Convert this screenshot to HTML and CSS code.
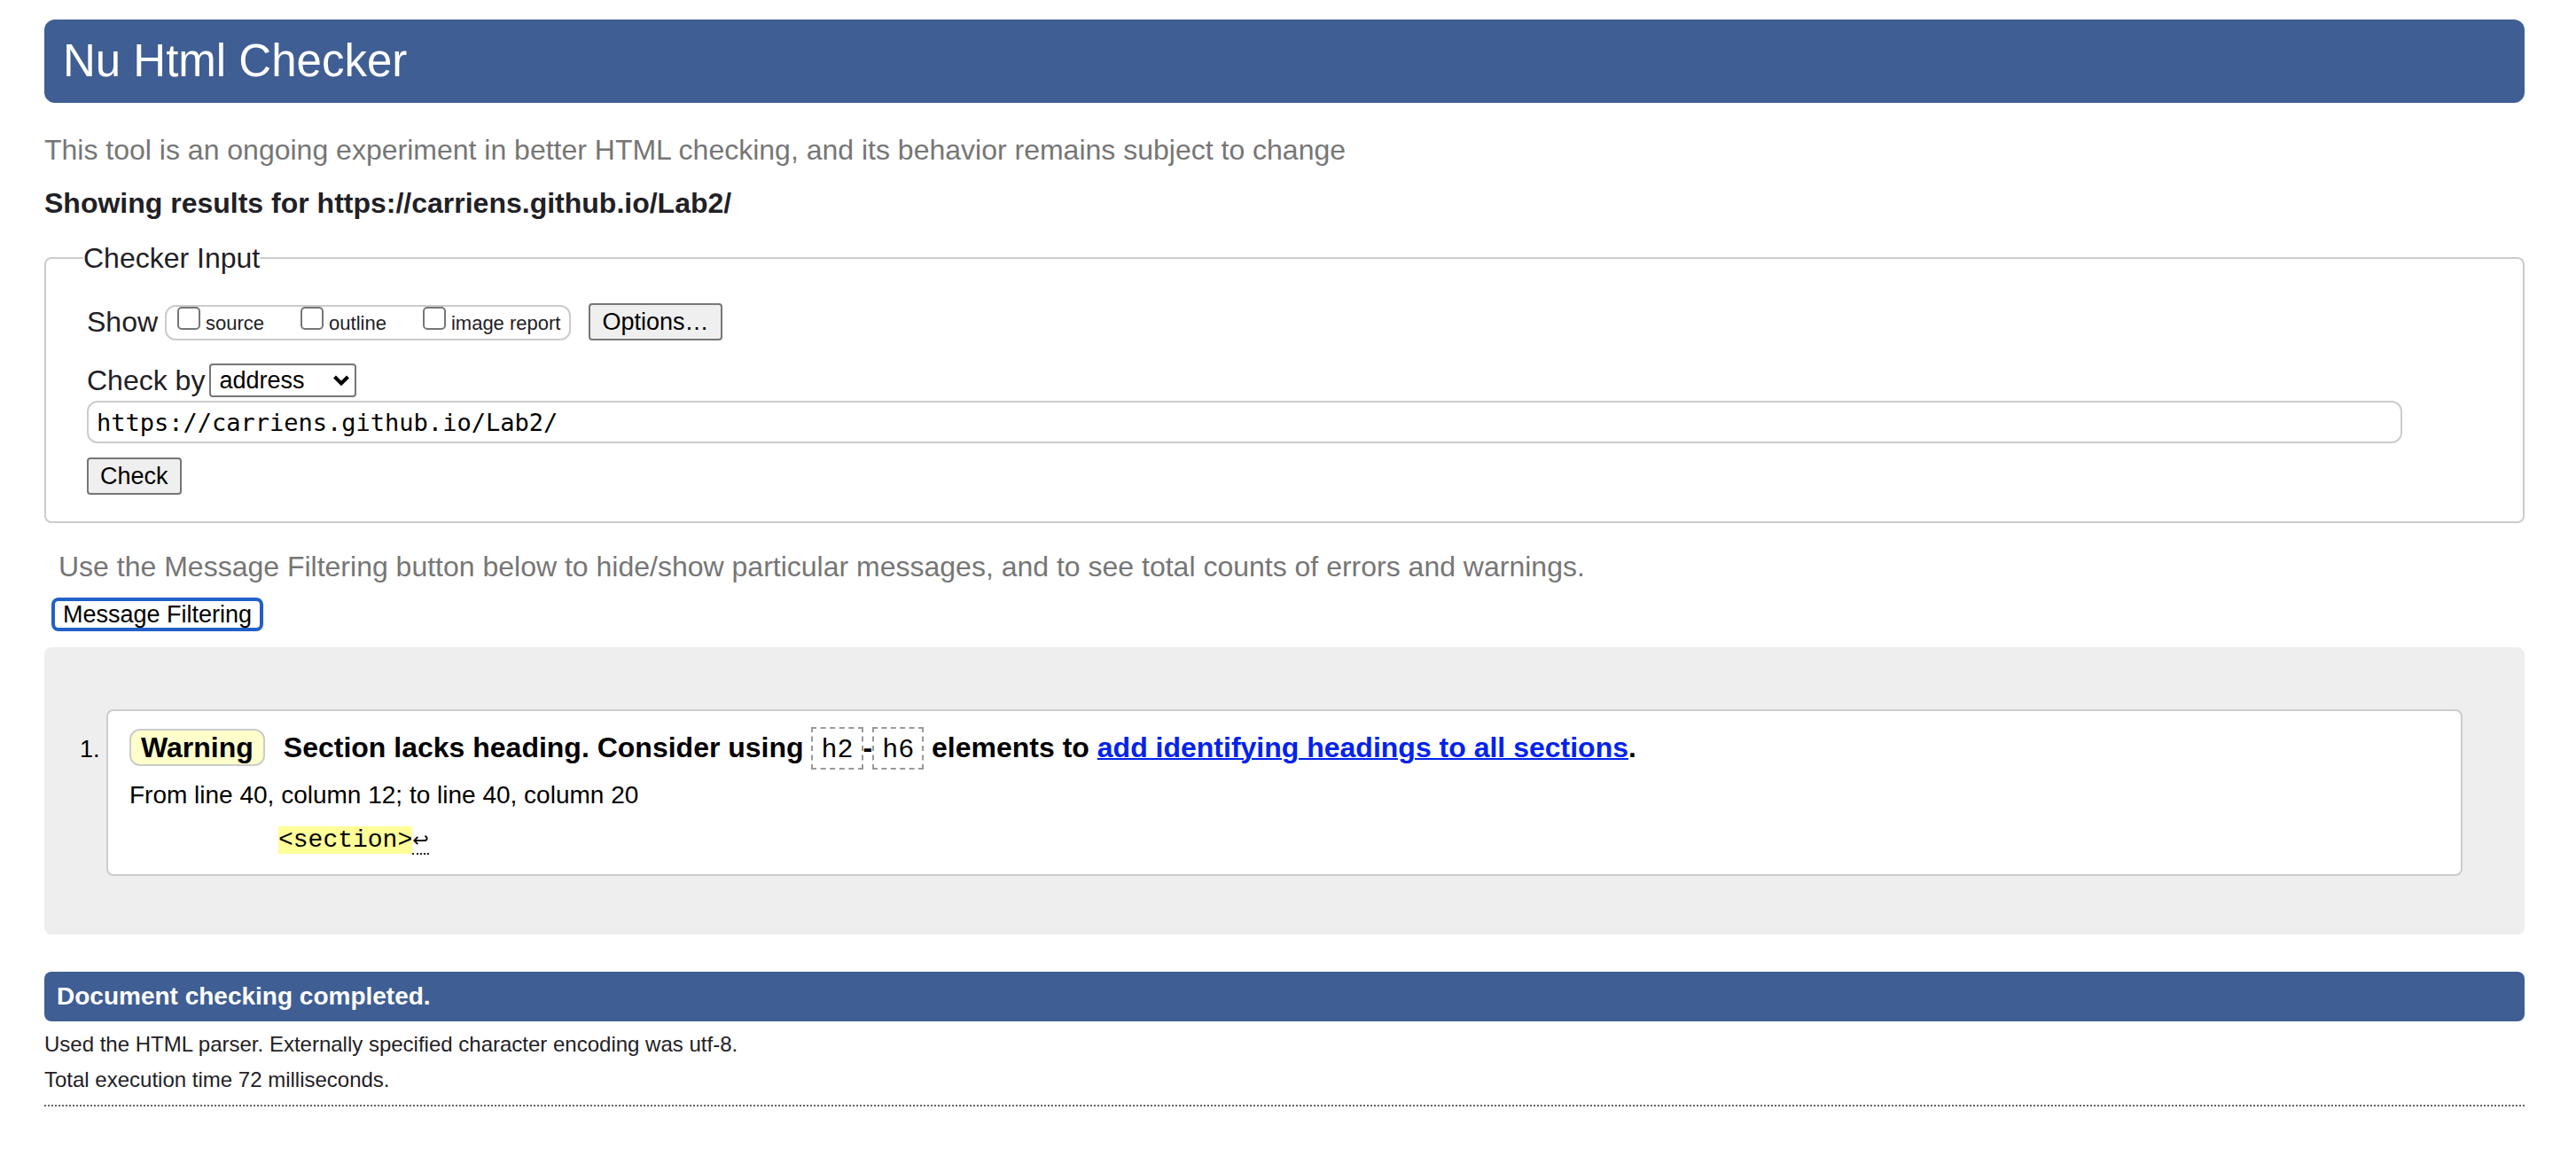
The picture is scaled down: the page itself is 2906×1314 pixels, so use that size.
FILE: index.html
```html
<!DOCTYPE html>
<html lang="en">
<head>
<meta charset="utf-8">
<title>Showing results for https://carriens.github.io/Lab2/ - Nu Html Checker</title>
<link rel="stylesheet" href="styles.css">
</head>
<body>
<header class="banner"><h1>Nu Html Checker</h1></header>
<main>
<p class="tagline">This tool is an ongoing experiment in better HTML checking, and its behavior remains subject to change</p>
<h2 class="results-title">Showing results for https://carriens.github.io/Lab2/</h2>
<form class="checker">
<fieldset class="panel">
<legend>Checker Input</legend>
<div class="show-row">
<span>Show</span>
<div class="checks">
<label class="check"><input type="checkbox"><span>source</span></label>
<label class="check"><input type="checkbox"><span>outline</span></label>
<label class="check"><input type="checkbox"><span>image report</span></label>
</div>
<button type="button" class="button">Options…</button>
</div>
<div class="by-row">
<label for="by">Check by</label>
<div class="select-wrap">
<select id="by"><option>address</option><option>file upload</option><option>text input</option></select>
<svg class="chevron" viewBox="0 0 18 14" aria-hidden="true"><path d="M1.500 3l7.500 7.500 7.500-7.500"/></svg>
</div>
</div>
<input class="address" type="text" aria-label="Address" value="https://carriens.github.io/Lab2/">
<button type="button" class="button">Check</button>
</fieldset>
</form>
<p class="hint">Use the Message Filtering button below to hide/show particular messages, and to see total counts of errors and warnings.</p>
<button type="button" class="filter">Message Filtering</button>
<ol class="results">
<li>
<div class="message">
<p class="summary"><strong class="badge">Warning</strong>Section lacks heading. Consider using <code>h2</code>-<code>h6</code> elements to <a href="#headings">add identifying headings to all sections</a>.</p>
<p class="location">From line 40, column 12; to line 40, column 20</p>
<p class="extract"><mark>&lt;section&gt;</mark><span class="newline">↩</span></p>
</div>
</li>
</ol>
<p class="done">Document checking completed.</p>
</main>
<footer class="details">
<p>Used the HTML parser. Externally specified character encoding was utf-8.</p>
<p>Total execution time 72 milliseconds.</p>
</footer>
</body>
</html>
```
FILE: styles.css
```css
* { box-sizing: border-box; }

body {
  margin: 22px 58px 0 50px;
  font: 32px/40px "Liberation Sans", Arial, sans-serif;
  color: #1f2126;
  background: #fff;
}

h1, h2, p { margin: 0; }
button, select { font: 27px/36px "Liberation Sans", Arial, sans-serif; color: #000; }

.banner {
  padding: 17px 21px;
  border-radius: 12px;
  background: #3f5e93;
  color: #fff;
}
.banner h1 { font-size: 51px; line-height: 60px; font-weight: 400; }

.tagline { margin-top: 33px; color: #767676; }
.results-title { margin-top: 20px; font-size: 32px; font-weight: 700; }

.panel {
  margin: 22px 0 0;
  padding: 31px 46px 30px;
  border: 2px solid #ccc;
  border-radius: 8px;
}
.panel legend { margin-left: -4px; padding: 0; }

.show-row { display: flex; align-items: center; }
.checks {
  display: flex;
  align-self: flex-end;
  gap: 41px;
  height: 40px;
  margin: 0 20px 0 8px;
  padding: 0 10px 0 12px;
  border: 2px solid #ccc;
  border-radius: 12px;
  font-size: 22px;
}
.check { display: flex; gap: 6px; line-height: 38px; }
.check input {
  appearance: none;
  width: 26px;
  height: 26px;
  margin: 0;
  border: 2px solid #767676;
  border-radius: 5px;
  background: #fff;
}
.button {
  display: block;
  height: 42px;
  padding: 0 13px;
  border: 2px solid #767676;
  border-radius: 4px;
  background: #efefef;
}

.by-row { display: flex; align-items: center; gap: 5px; margin-top: 25px; line-height: 38px; }
.select-wrap { display: grid; align-items: center; height: 40px; }
.select-wrap > * { grid-area: 1 / 1; }
.select-wrap select {
  appearance: none;
  width: 166px;
  height: 38px;
  padding: 0 9px;
  border: 2px solid #767676;
  border-radius: 4px;
  background: #fff;
  line-height: 34px;
}
.chevron {
  width: 18px;
  height: 14px;
  margin-right: 8px;
  justify-self: end;
  fill: none;
  stroke: #000;
  stroke-width: 4;
  pointer-events: none;
}
.address {
  display: block;
  width: calc(100% - 90px);
  height: 48px;
  margin: 3px 0 16px;
  padding: 0 9px;
  border: 2px solid #ccc;
  border-radius: 12px;
  background: #fff;
  color: #000;
  font: 27px "DejaVu Sans Mono", monospace;
}

.hint { margin: 29px 0 0 16px; color: #767676; }
.filter {
  display: block;
  height: 38px;
  margin: 15px 0 18px 8px;
  padding: 0 9px;
  border: 4px solid #2160c8;
  border-radius: 8px;
  background: #fff;
  line-height: 30px;
}

.results {
  margin: 0;
  padding: 70px 70px 66px;
  border-radius: 8px;
  background: #eee;
  color: #000;
  font-size: 27px;
}
.message {
  padding: 17px 24px 18px;
  border: 2px solid #ccc;
  border-radius: 8px;
  background: #fff;
}
.summary { font-size: 32px; line-height: 48px; font-weight: 700; }
.badge {
  display: inline-block;
  margin-right: 21px;
  padding: 0 11px;
  border: 2px solid #ccc;
  border-radius: 12px;
  background: #ffffcc;
  line-height: 38px;
}
.summary code {
  padding: 7px 9px 3px;
  border: 2px dashed #999;
  font: 30px/40px "Liberation Mono", monospace;
}
.summary a { color: #0022ee; text-decoration-thickness: 2px; }
.location { margin-top: 10px; font-size: 28px; }
.extract {
  margin: 11px 0 0 168px;
  font: 28px/40px "Liberation Mono", monospace;
}
.extract mark { background: #ffff99; color: #000; }
.newline {
  padding-bottom: 2px;
  border-bottom: 2px dotted #1f2126;
  font: 22px/32px "DejaVu Sans", sans-serif;
}

.done {
  margin-top: 42px;
  padding: 8px 14px;
  border-radius: 8px;
  background: #3f5e93;
  color: #fff;
  font-size: 28px;
  font-weight: 700;
}
.details {
  padding: 6px 0 8px;
  border-bottom: 2px dotted #666;
  font-size: 24px;
}
```
